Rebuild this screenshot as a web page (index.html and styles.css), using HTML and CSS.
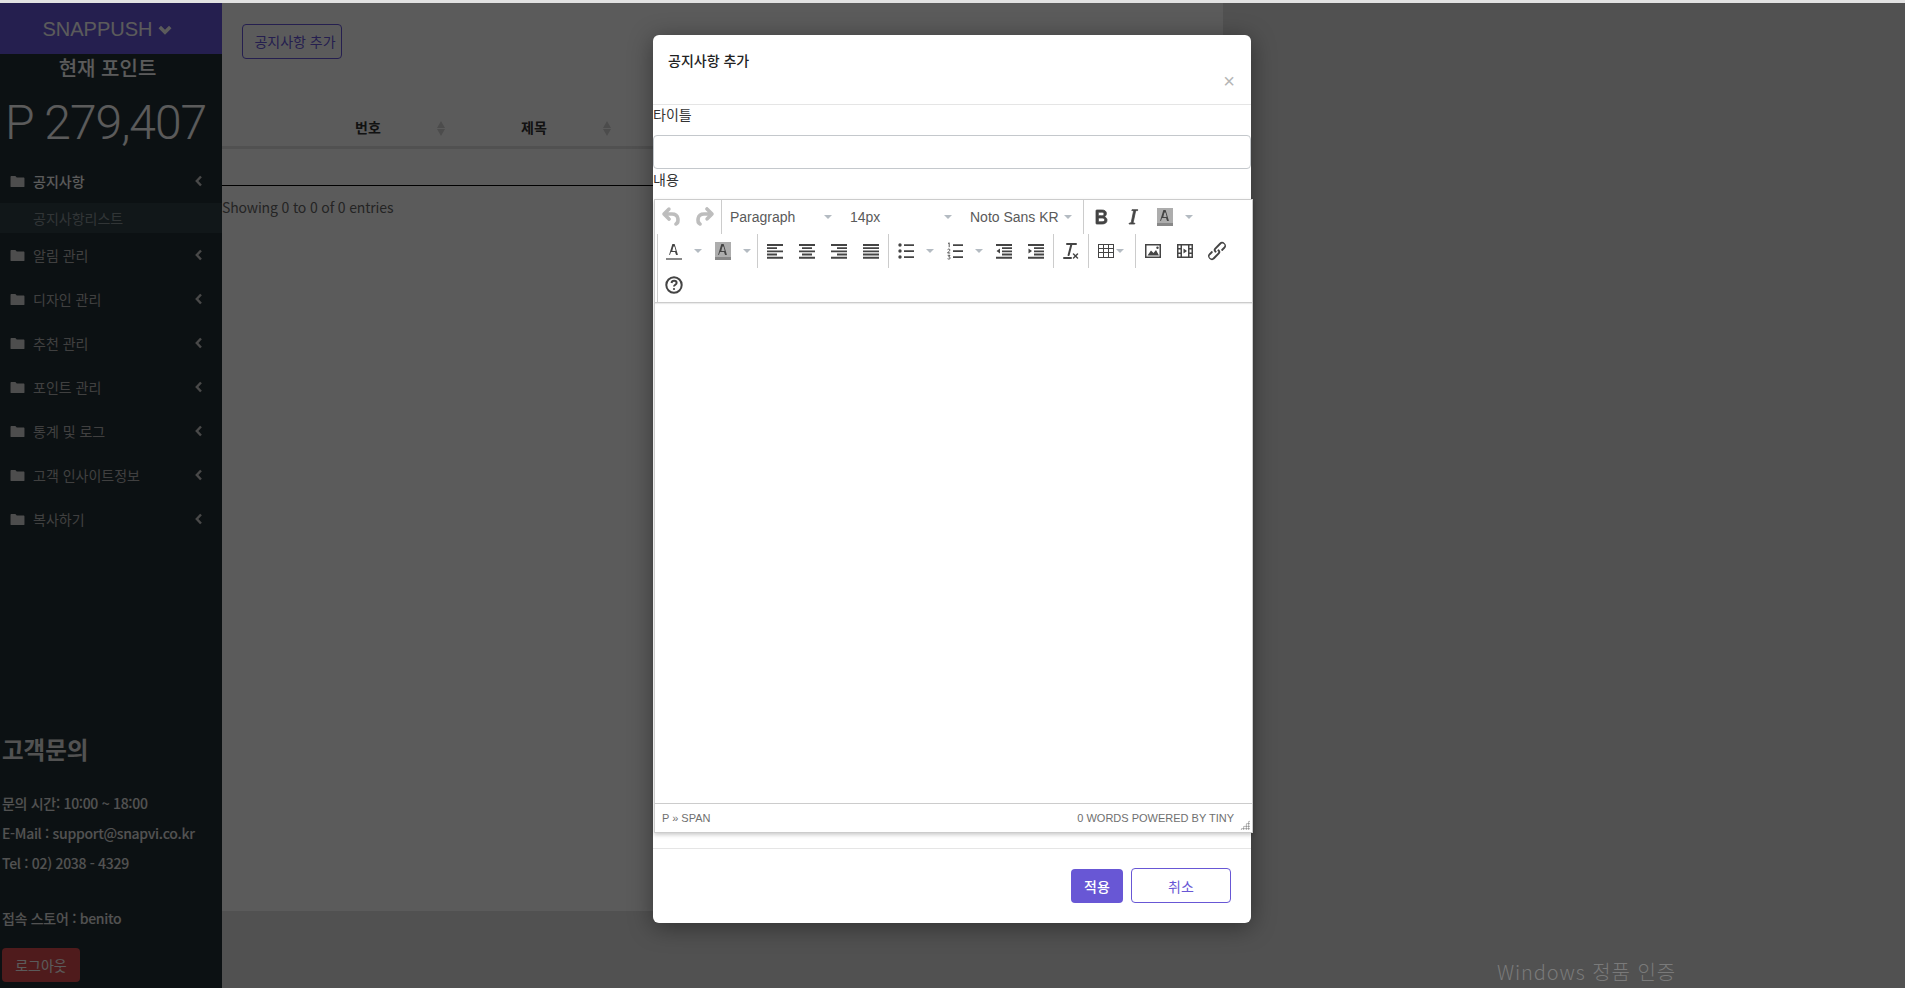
FILE: index.html
```html
<!DOCTYPE html>
<html lang="ko">
<head>
    <meta charset="UTF-8">
    <title>SNAPPUSH</title>
    <link rel="stylesheet" href="styles.css">
</head>
<body>
    <svg class="icon-defs" xmlns="http://www.w3.org/2000/svg">
        <symbol id="i-undo" viewBox="0 0 24 24"><path d="M6.4 8H12c3.7 0 6.2 2 6.8 5.1.6 2.7-.4 5.6-2.3 6.8a1 1 0 0 1-1-1.8c1.1-.6 1.8-2.7 1.4-4.6-.5-2.1-2.1-3.5-4.9-3.5H6.4l3.3 3.3a1 1 0 1 1-1.4 1.4l-5-5a1 1 0 0 1 0-1.4l5-5a1 1 0 0 1 1.4 1.4L6.4 8z"/></symbol>
        <symbol id="i-redo" viewBox="0 0 24 24"><path d="M17.6 10H12c-2.8 0-4.4 1.4-4.9 3.5-.4 2 .3 4 1.4 4.6a1 1 0 1 1-1 1.8c-2-1.2-2.9-4.1-2.3-6.8.6-3 3-5.1 6.8-5.1h5.6l-3.3-3.3a1 1 0 1 1 1.4-1.4l5 5a1 1 0 0 1 0 1.4l-5 5a1 1 0 0 1-1.4-1.4l3.3-3.3z"/></symbol>
        <symbol id="i-bold" viewBox="0 0 24 24"><path d="M7.8 19c-.3 0-.5 0-.6-.2l-.2-.5V5.7c0-.2 0-.4.2-.5l.6-.2h5c1.5 0 2.7.3 3.5 1 .7.6 1.1 1.4 1.1 2.5a3 3 0 0 1-.6 1.9c-.4.6-1 1-1.6 1.2.4.1.9.3 1.3.6s.8.7 1 1.2c.4.4.5 1 .5 1.6 0 1.3-.4 2.3-1.3 3-.8.7-2.1 1-3.8 1H7.8zm5-8.3c.6 0 1.2-.1 1.6-.5.4-.3.6-.7.6-1.3 0-1.1-.8-1.7-2.3-1.7H9.3v3.5h3.4zm.5 6c.7 0 1.3-.1 1.7-.4.4-.4.6-.9.6-1.5s-.2-1-.7-1.4c-.4-.3-1-.4-2-.4H9.4v3.8h4z"/></symbol>
        <symbol id="i-italic" viewBox="0 0 24 24"><path d="M16.7 4.7l-.1.9h-.3c-.6 0-1 0-1.4.3-.3.3-.4.6-.5 1.1l-2.1 9.8v.6c0 .5.4.8 1.4.8h.2l-.2.8H8l.2-.8h.2c1.1 0 1.8-.5 2-1.5l2-9.8.1-.5c0-.6-.4-.8-1.4-.8h-.3l.2-.9h5.8z"/></symbol>
        <symbol id="i-forecolor" viewBox="0 0 24 24"><path d="M4 19h16v2H4z" class="swatch"/><path d="M8.7 16h-1a.5.5 0 0 1-.5-.6l3-10c.1-.3.3-.4.5-.4h1.6c.2 0 .4.1.5.4l3 10a.5.5 0 0 1-.5.6h-1a.5.5 0 0 1-.4-.4l-.7-2.2c0-.3-.3-.4-.5-.4h-3.4c-.2 0-.4.1-.5.4l-.7 2.2c0 .3-.2.4-.4.4zm2.6-8.1l-.9 3.5a.5.5 0 0 0 .5.6h2.2a.5.5 0 0 0 .5-.6l-.9-3.500c-.1-.4-.3-.4-.7-.4s-.6 0-.7.4z"/></symbol>
        <symbol id="i-backcolor" viewBox="0 0 24 24"><path d="M4 3h16v15H4z" class="swatch-light"/><path d="M4 18h16v3H4z" class="swatch"/><path d="M8.7 16h-1a.5.5 0 0 1-.5-.6l3-10c.1-.3.3-.4.5-.4h1.6c.2 0 .4.1.5.4l3 10a.5.5 0 0 1-.5.6h-1a.5.5 0 0 1-.4-.4l-.7-2.2c0-.3-.3-.4-.5-.4h-3.400c-.2 0-.4.1-.5.4l-.7 2.2c0 .3-.2.4-.4.4zm2.6-8.100l-.9 3.500a.5.5 0 0 0 .5.6h2.200a.5.5 0 0 0 .5-.6l-.9-3.500c-.1-.4-.3-.4-.7-.4s-.6 0-.7.4z"/></symbol>
        <symbol id="i-left" viewBox="0 0 24 24"><path d="M4 5h16v1.900H4zM4 8.200h10v1.900H4zM4 11.400h16v1.900H4zM4 14.600h10v1.900H4zM4 17.800h16v1.900H4z"/></symbol>
        <symbol id="i-center" viewBox="0 0 24 24"><path d="M4 5h16v1.900H4zM7 8.200h10v1.900H7zM4 11.400h16v1.900H4zM7 14.600h10v1.900H7zM4 17.800h16v1.900H4z"/></symbol>
        <symbol id="i-right" viewBox="0 0 24 24"><path d="M4 5h16v1.900H4zM10 8.200h10v1.900H10zM4 11.400h16v1.900H4zM10 14.600h10v1.900H10zM4 17.800h16v1.900H4z"/></symbol>
        <symbol id="i-justify" viewBox="0 0 24 24"><path d="M4 5h16v1.900H4zM4 8.200h16v1.900H4zM4 11.400h16v1.900H4zM4 14.600h16v1.900H4zM4 17.800h16v1.900H4z"/></symbol>
        <symbol id="i-bullist" viewBox="0 0 24 24"><path d="M10 5.200h10v1.800H10zM10 11.200h10v1.800H10zM10 17.200h10v1.800H10z"/><circle cx="6" cy="6" r="1.700"/><circle cx="6" cy="12" r="1.700"/><circle cx="6" cy="18" r="1.700"/></symbol>
        <symbol id="i-numlist" viewBox="0 0 24 24"><path d="M10 5.200h10v1.800H10zM10 11.200h10v1.800H10zM10 17.200h10v1.800H10z"/><path class="num-stroke" d="M5 4.600l1.200-.8v4.400M4.600 10.600c.4-.8 2.400-.8 2.400.4 0 1-1.800 1.600-2.400 3H7.200M4.700 16.300h2.300L5.700 18c1 0 1.500.5 1.500 1.100 0 1-1.800 1.200-2.600.6"/></symbol>
        <symbol id="i-outdent" viewBox="0 0 24 24"><path d="M4 5h16v1.900H4zM10 8.200h10v1.900H10zM10 11.400h10v1.900H10zM10 14.600h10v1.900H10zM4 17.800h16v1.900H4zM8 9.500v5L4.500 12z"/></symbol>
        <symbol id="i-indent" viewBox="0 0 24 24"><path d="M4 5h16v1.900H4zM10 8.200h10v1.900H10zM10 11.400h10v1.900H10zM10 14.600h10v1.900H10zM4 17.800h16v1.900H4zM4.500 9.500v5L8 12z"/></symbol>
        <symbol id="i-removeformat" viewBox="0 0 24 24"><path d="M13.200 6a1 1 0 0 1 0 .2l-2.600 10a1 1 0 0 1-1 .8h-.2a.8.8 0 0 1-.8-1l2.600-10H8a1 1 0 1 1 0-2h9a1 1 0 0 1 0 2h-3.800zM5 18h7a1 1 0 0 1 0 2H5a1 1 0 0 1 0-2zm13 1.500L16.500 18 15 19.500a.7.7 0 0 1-1-1l1.500-1.500-1.500-1.500a.7.7 0 0 1 1-1l1.500 1.500 1.500-1.500a.7.7 0 0 1 1 1L17.500 17l1.500 1.500a.7.7 0 0 1-1 1z"/></symbol>
        <symbol id="i-table" viewBox="0 0 24 24"><path d="M4 5h16v14H4zM5 6v3h4V6zm5 0v3h4V6zm5 0v3h4V6zM5 10v3h4v-3zm5 0v3h4v-3zm5 0v3h4v-3zM5 14v4h4v-4zm5 0v4h4v-4zm5 0v4h4v-4z" fill-rule="evenodd"/></symbol>
        <symbol id="i-image" viewBox="0 0 24 24"><path d="M4 5h16v14H4zM5.500 6.500v11h13v-11z" fill-rule="evenodd"/><path d="M6.500 16.500l3.500-5 2.500 2.500 2.500-3 3 5.500z"/><circle cx="16.500" cy="8.800" r="1.200"/></symbol>
        <symbol id="i-media" viewBox="0 0 24 24"><path d="M4 5h16v14H4zM5.500 6.500v2.500h2V6.500zm11 0v2.500h2V6.500zm-7.500 0v11h6v-11zM5.500 10.500v3h2v-3zm11 0v3h2v-3zM5.500 15v2.500h2V15zm11 0v2.500h2V15z" fill-rule="evenodd"/><path d="M10.500 9.500l3.500 2.500-3.500 2.500z"/></symbol>
        <symbol id="i-link" viewBox="0 0 24 24"><path d="M6.200 12.300a1 1 0 0 1 1.400 1.400l-2 2a2 2 0 1 0 2.600 2.800l4.800-4.800a1 1 0 0 0 0-1.400 1 1 0 1 1 1.400-1.300 2.900 2.900 0 0 1 0 4L9.600 20a3.900 3.900 0 0 1-5.500-5.500l2-2zm11.600-.6a1 1 0 0 1-1.400-1.400l2-2a2 2 0 1 0-2.600-2.800L11 10.300a1 1 0 0 0 0 1.400A1 1 0 1 1 9.600 13a2.900 2.900 0 0 1 0-4L14.400 4a3.900 3.900 0 0 1 5.500 5.500l-2 2z"/></symbol>
        <symbol id="i-help" viewBox="0 0 24 24"><circle class="help-ring" cx="12" cy="12" r="7.700"/><path class="help-mark" d="M9.500 10c.2-1.500 1.300-2.200 2.600-2.200 1.500 0 2.500 1 2.500 2.100 0 1.800-2.600 1.900-2.600 3.700"/><circle cx="12" cy="16" r="1.100"/></symbol>
        <symbol id="i-folder" viewBox="0 0 16 14"><path d="M1.500 1h4.200l1.500 1.700h7.300c.5 0 1 .5 1 1v8.300c0 .6-.5 1-1 1h-13c-.5 0-1-.4-1-1V2c0-.6.500-1 1-1z"/></symbol>
    </svg>

    <div class="top-strip"></div>

    <div class="app">
        <aside class="sidebar">
            <div class="brand">SNAPPUSH
                <svg class="brand-caret" viewBox="0 0 12 8"><path d="M1.500 1.500L6 6l4.500-4.500"/></svg>
            </div>
            <div class="point-title">현재 포인트</div>
            <div class="point-value">P 279,407</div>

            <ul class="menu">
                <li class="menu-item active">
                    <svg class="folder"><use href="#i-folder"/></svg><span>공지사항</span>
                    <svg class="menu-caret" viewBox="0 0 8 12"><path d="M6 1.500L1.800 6 6 10.500"/></svg>
                </li>
                <li class="menu-sub">공지사항리스트</li>
                <li class="menu-item">
                    <svg class="folder"><use href="#i-folder"/></svg><span>알림 관리</span>
                    <svg class="menu-caret" viewBox="0 0 8 12"><path d="M6 1.500L1.800 6 6 10.500"/></svg>
                </li>
                <li class="menu-item">
                    <svg class="folder"><use href="#i-folder"/></svg><span>디자인 관리</span>
                    <svg class="menu-caret" viewBox="0 0 8 12"><path d="M6 1.500L1.800 6 6 10.500"/></svg>
                </li>
                <li class="menu-item">
                    <svg class="folder"><use href="#i-folder"/></svg><span>추천 관리</span>
                    <svg class="menu-caret" viewBox="0 0 8 12"><path d="M6 1.500L1.800 6 6 10.500"/></svg>
                </li>
                <li class="menu-item">
                    <svg class="folder"><use href="#i-folder"/></svg><span>포인트 관리</span>
                    <svg class="menu-caret" viewBox="0 0 8 12"><path d="M6 1.500L1.800 6 6 10.500"/></svg>
                </li>
                <li class="menu-item">
                    <svg class="folder"><use href="#i-folder"/></svg><span>통계 및 로그</span>
                    <svg class="menu-caret" viewBox="0 0 8 12"><path d="M6 1.500L1.800 6 6 10.500"/></svg>
                </li>
                <li class="menu-item">
                    <svg class="folder"><use href="#i-folder"/></svg><span>고객 인사이트정보</span>
                    <svg class="menu-caret" viewBox="0 0 8 12"><path d="M6 1.500L1.800 6 6 10.500"/></svg>
                </li>
                <li class="menu-item">
                    <svg class="folder"><use href="#i-folder"/></svg><span>복사하기</span>
                    <svg class="menu-caret" viewBox="0 0 8 12"><path d="M6 1.500L1.800 6 6 10.500"/></svg>
                </li>
            </ul>

            <div class="contact">
                <h3>고객문의</h3>
                <p>문의 시간: 10:00 ~ 18:00</p>
                <p>E-Mail : support@snapvi.co.kr</p>
                <p>Tel : 02) 2038 - 4329</p>
                <p class="store">접속 스토어 : benito</p>
                <button class="logout">로그아웃</button>
            </div>
        </aside>

        <div class="page">
            <main class="content">
                <button class="add-btn">공지사항 추가</button>
                <div class="table-head">
                    <div class="th"></div>
                    <div class="th sortable">번호<span class="sort"></span></div>
                    <div class="th sortable">제목<span class="sort"></span></div>
                    <div class="th"></div>
                </div>
                <div class="table-body"></div>
                <div class="table-info">Showing 0 to 0 of 0 entries</div>
            </main>
        </div>
    </div>

    <div class="backdrop"></div>

    <div class="modal">
        <div class="modal-header">
            <h4>공지사항 추가</h4>
            <span class="modal-close">×</span>
        </div>
        <label class="field-label">타이틀</label>
        <input class="field-input" type="text">
        <label class="field-label compact">내용</label>

        <div class="editor">
            <div class="toolbar">
                <div class="tb-row">
                    <div class="tb-group first">
                        <span class="tb-btn disabled"><svg><use href="#i-undo"/></svg></span>
                        <span class="tb-btn disabled"><svg><use href="#i-redo"/></svg></span>
                    </div>
                    <div class="tb-group selects">
                        <span class="tb-select">Paragraph<i class="caret"></i></span>
                        <span class="tb-select">14px<i class="caret"></i></span>
                        <span class="tb-select">Noto Sans KR<i class="caret"></i></span>
                    </div>
                    <div class="tb-group last">
                        <span class="tb-btn heavy"><svg><use href="#i-bold"/></svg></span>
                        <span class="tb-btn heavy"><svg><use href="#i-italic"/></svg></span>
                        <span class="tb-btn"><svg><use href="#i-backcolor"/></svg></span>
                        <span class="tb-arrow"><i class="caret"></i></span>
                    </div>
                </div>
                <div class="tb-wrap">
                    <div class="tb-row">
                        <div class="tb-group">
                            <span class="tb-btn"><svg><use href="#i-forecolor"/></svg></span>
                            <span class="tb-arrow"><i class="caret"></i></span>
                            <span class="tb-btn spaced"><svg><use href="#i-backcolor"/></svg></span>
                            <span class="tb-arrow"><i class="caret"></i></span>
                        </div>
                        <div class="tb-group">
                            <span class="tb-btn"><svg><use href="#i-left"/></svg></span>
                            <span class="tb-btn"><svg><use href="#i-center"/></svg></span>
                            <span class="tb-btn"><svg><use href="#i-right"/></svg></span>
                            <span class="tb-btn"><svg><use href="#i-justify"/></svg></span>
                        </div>
                        <div class="tb-group">
                            <span class="tb-btn"><svg><use href="#i-bullist"/></svg></span>
                            <span class="tb-arrow"><i class="caret"></i></span>
                            <span class="tb-btn spaced"><svg><use href="#i-numlist"/></svg></span>
                            <span class="tb-arrow"><i class="caret"></i></span>
                            <span class="tb-btn spaced"><svg><use href="#i-outdent"/></svg></span>
                            <span class="tb-btn"><svg><use href="#i-indent"/></svg></span>
                        </div>
                        <div class="tb-group">
                            <span class="tb-btn"><svg><use href="#i-removeformat"/></svg></span>
                        </div>
                        <div class="tb-group">
                            <span class="tb-btn"><svg><use href="#i-table"/></svg></span>
                            <span class="tb-arrow tight"><i class="caret"></i></span>
                        </div>
                        <div class="tb-group last">
                            <span class="tb-btn"><svg><use href="#i-image"/></svg></span>
                            <span class="tb-btn"><svg><use href="#i-media"/></svg></span>
                            <span class="tb-btn"><svg><use href="#i-link"/></svg></span>
                        </div>
                    </div>
                    <div class="tb-row">
                        <div class="tb-group last">
                            <span class="tb-btn"><svg><use href="#i-help"/></svg></span>
                        </div>
                    </div>
                </div>
            </div>
            <div class="edit-area"></div>
            <div class="statusbar">
                <span>P » SPAN</span>
                <span class="status-right">0 WORDS POWERED BY TINY</span>
                <span class="resize-grip"></span>
            </div>
        </div>

        <div class="modal-footer">
            <button class="btn-apply">적용</button>
            <button class="btn-cancel">취소</button>
        </div>
    </div>

    <div class="activation">Windows 정품 인증</div>
</body>
</html>
```

FILE: styles.css
```css
* {
    box-sizing: border-box;
}

html, body {
    height: 100%;
}

body {
    margin: 0;
    overflow: hidden;
    background-color: #e3e3e3;
    font-family: 'Liberation Sans', 'Noto Sans CJK KR', sans-serif;
    font-size: 14px;
    color: #333;
}

.icon-defs {
    position: absolute;
    width: 0;
    height: 0;
}

.top-strip {
    height: 3px;
    background-color: #e2e2e2;
}

.app {
    display: flex;
    height: 985px;
}

/* sidebar */
.sidebar {
    display: flex;
    flex-direction: column;
    flex: 0 0 222px;
    background-color: #243035;
    color: #ccc;
}

.brand {
    display: flex;
    align-items: center;
    justify-content: center;
    gap: 5px;
    height: 51px;
    padding: 2px 8px 0 0;
    background-color: #6857dd;
    color: #fff;
    font-size: 20px;
}

.brand-caret {
    width: 14px;
    height: 10px;
    fill: none;
    stroke: #fff;
    stroke-width: 3;
}

.point-title {
    height: 30px;
    padding-right: 7px;
    line-height: 31px;
    text-align: center;
    color: #fff;
    font-size: 20px;
    font-weight: 500;
}

.point-value {
    height: 75px;
    padding: 9px 0 0 5px;
    font-family: 'Roboto', sans-serif;
    font-size: 48px;
    line-height: 60px;
    letter-spacing: -1px;
    white-space: nowrap;
    color: #fff;
    font-weight: 300;
}

.menu {
    margin: 0;
    padding: 0;
    list-style: none;
    font-family: 'Noto Sans CJK KR', sans-serif;
}

.menu-item {
    display: flex;
    align-items: center;
    height: 44px;
    padding: 0 19px 0 10px;
    color: #b4b4b4;
}

.menu-item.active {
    color: #fff;
    font-weight: 500;
}

.folder {
    flex: none;
    width: 15px;
    height: 13px;
    margin-right: 8px;
    fill: #d8d8d8;
}

.menu-caret {
    width: 8px;
    height: 12px;
    margin-left: auto;
    fill: none;
    stroke: #ccc;
    stroke-width: 2.4;
}

.menu-sub {
    height: 30px;
    padding-left: 33px;
    line-height: 30px;
    background-color: #304147;
    color: #8b9599;
}

.contact {
    margin-top: auto;
    padding: 0 0 6px 2px;
    font-family: 'Noto Sans CJK KR', sans-serif;
    font-weight: 500;
    color: #e6e6e6;
    letter-spacing: -.3px;
}

.contact h3 {
    margin: 0 0 24px;
    font-size: 23.5px;
    line-height: 30px;
    font-weight: 700;
    letter-spacing: 0;
}

.contact p {
    margin: 0;
    line-height: 30px;
    font-size: 14px;
}

.contact .store {
    margin-top: 25px;
}

.logout {
    display: block;
    width: 78px;
    height: 34px;
    margin-top: 15px;
    border: 0;
    border-radius: 4px;
    background-color: #dc4c4f;
    color: #fff;
    font-family: inherit;
    font-size: 14px;
}

/* page behind the modal */
.page {
    flex: 1;
    min-width: 0;
}

.content {
    width: 1001px;
    height: 908px;
    padding-top: 21px;
    background-color: #fff;
    font-family: 'Noto Sans CJK KR', sans-serif;
}

.add-btn {
    display: block;
    width: 100px;
    height: 35px;
    margin-left: 20px;
    padding: 0 0 2px 6px;
    border: 1px solid #6857dd;
    border-radius: 4px;
    background: #fff;
    color: #6857dd;
    font-family: inherit;
    font-size: 14px;
}

.table-head {
    display: grid;
    grid-template-columns: 63px 166px 166px 1fr;
    height: 47px;
    margin-top: 43px;
    border-bottom: 3px solid #e3e3e3;
    color: #333;
    font-weight: 700;
}

.th {
    display: flex;
    align-items: center;
    justify-content: center;
    padding-top: 5px;
}

.sortable {
    position: relative;
}

.sort {
    position: absolute;
    top: 19px;
    right: 6px;
    width: 8px;
    height: 15px;
}

.sort::before,
.sort::after {
    content: "";
    position: absolute;
    left: 0;
    border-left: 4px solid transparent;
    border-right: 4px solid transparent;
}

.sort::before {
    top: 0;
    border-bottom: 7px solid #d4d4d4;
}

.sort::after {
    bottom: 0;
    border-top: 7px solid #d4d4d4;
}

.table-body {
    height: 37px;
    border-bottom: 1px solid #000;
}

.table-info {
    padding-top: 10px;
    color: #666;
    line-height: 22px;
    letter-spacing: -.15px;
}

/* modal */
.backdrop {
    position: absolute;
    top: 3px;
    left: 0;
    right: 0;
    bottom: 0;
    background-color: rgba(0, 0, 0, 0.643);
}

.modal {
    position: absolute;
    top: 35px;
    left: 653px;
    display: flex;
    flex-direction: column;
    width: 598px;
    height: 888px;
    border-radius: 6px;
    background-color: #fff;
    box-shadow: 0 4px 24px rgba(0, 0, 0, 0.4);
    color: #333;
}

.modal-header {
    display: flex;
    justify-content: space-between;
    flex: none;
    height: 70px;
    padding: 14px 16px 0 15px;
    border-bottom: 1px solid #e5e5e5;
}

.modal-header h4 {
    margin: 0;
    font-family: 'Noto Sans CJK KR', sans-serif;
    font-size: 14px;
    line-height: 22px;
    font-weight: 500;
    color: #222;
}

.modal-close {
    margin-top: 22px;
    font-size: 20px;
    line-height: 20px;
    color: #b5b5b5;
}

.field-label {
    flex: none;
    height: 30px;
    line-height: 21px;
    color: #333;
}

.field-label.compact {
    height: 30px;
    line-height: 23px;
}

.field-input {
    flex: none;
    width: 100%;
    height: 34px;
    border: 1px solid #c4c8cc;
    border-radius: 4px;
    background: #fff;
}

.editor {
    display: flex;
    flex-direction: column;
    flex: none;
    width: 599px;
    height: 634px;
    margin-left: 1px;
    border: 1px solid #ccc;
    background-color: #fff;
    box-shadow: 0 2px 4px rgba(0, 0, 0, 0.2);
}

.toolbar {
    flex: none;
    border-bottom: 1px solid #ccc;
    box-shadow: 0 1px 1px rgba(0, 0, 0, 0.08);
}

.tb-row {
    display: flex;
    height: 34px;
}

.tb-wrap {
    margin-left: 2px;
    border-left: 1px solid #ccc;
}

.tb-group {
    display: flex;
    align-items: center;
    padding: 0 1px;
    border-right: 1px solid #ccc;
}

.tb-group.last {
    border-right: 0;
}

.tb-group.first {
    padding: 0 0 0 1px;
    width: 67px;
}

.tb-wrap .tb-group:first-child {
    padding: 0;
    width: 100px;
}

.tb-wrap .tb-group:nth-child(2) {
    width: 131px;
}

.tb-wrap .tb-group:nth-child(3) {
    width: 165px;
}

.tb-btn {
    display: flex;
    align-items: center;
    justify-content: center;
    flex: none;
    width: 32px;
    height: 34px;
}

.tb-btn svg {
    width: 24px;
    height: 24px;
    fill: #444;
}

.tb-btn.disabled svg {
    fill: #bdbdbd;
    stroke: #bdbdbd;
    stroke-width: 1.6;
}

.tb-btn.heavy svg {
    stroke: #444;
    stroke-width: .8;
}

.tb-btn.spaced {
    margin-left: 1px;
}

.tb-arrow {
    display: flex;
    align-items: center;
    justify-content: center;
    flex: none;
    width: 16px;
    height: 34px;
}

.tb-arrow.tight {
    width: 12px;
    margin-left: -8px;
    margin-right: 8px;
}

.caret {
    width: 0;
    height: 0;
    border-left: 4px solid transparent;
    border-right: 4px solid transparent;
    border-top: 4px solid #b4bbc2;
}

.tb-select {
    display: flex;
    align-items: center;
    flex: none;
    width: 120px;
    height: 34px;
    padding-left: 8px;
    color: #5a5a5a;
    white-space: nowrap;
}

.tb-select .caret {
    position: absolute;
    margin-left: 94px;
}

.tb-group.selects {
    padding: 0;
    width: 362px;
}

.swatch {
    fill: #888;
}

.swatch-light {
    fill: #adadad;
}

.tb-btn:first-child .swatch {
    fill: #666;
}

.num-stroke {
    fill: none;
    stroke: #444;
    stroke-width: .9;
}

.help-ring,
.help-mark {
    fill: none;
    stroke: #444;
    stroke-width: 2;
}

.edit-area {
    flex: 1;
}

.statusbar {
    position: relative;
    display: flex;
    justify-content: space-between;
    align-items: center;
    flex: none;
    height: 29px;
    padding: 0 18px 0 7px;
    border-top: 1px solid #ccc;
    font-size: 11px;
    color: #6f6f6f;
}

.resize-grip {
    position: absolute;
    right: 2px;
    bottom: 2px;
    width: 10px;
    height: 10px;
    background-image: radial-gradient(#777 0.8px, transparent 0.9px);
    background-size: 2.5px 2.5px;
    clip-path: polygon(100% 0, 100% 100%, 0 100%);
}

.modal-footer {
    display: flex;
    justify-content: flex-end;
    align-items: center;
    gap: 8px;
    flex: none;
    margin-top: 15px;
    height: 74px;
    padding: 0 20px 0 0;
    border-top: 1px solid #e5e5e5;
    font-family: 'Noto Sans CJK KR', sans-serif;
}

.btn-apply {
    width: 52px;
    height: 34px;
    padding: 0;
    border: 0;
    border-radius: 4px;
    background-color: #6857d5;
    color: #fff;
    font-family: inherit;
    font-size: 14px;
    font-weight: 500;
}

.btn-cancel {
    width: 100px;
    height: 35px;
    padding: 0;
    border: 1px solid #6857d5;
    border-radius: 4px;
    background: #fff;
    color: #6857d5;
    font-family: inherit;
    font-size: 14px;
}

.activation {
    position: absolute;
    top: 959px;
    left: 1497px;
    font-family: 'Noto Sans CJK KR', sans-serif;
    font-size: 20px;
    font-weight: 300;
    line-height: 26px;
    color: #7a7a7a;
    letter-spacing: .9px;
}
```
